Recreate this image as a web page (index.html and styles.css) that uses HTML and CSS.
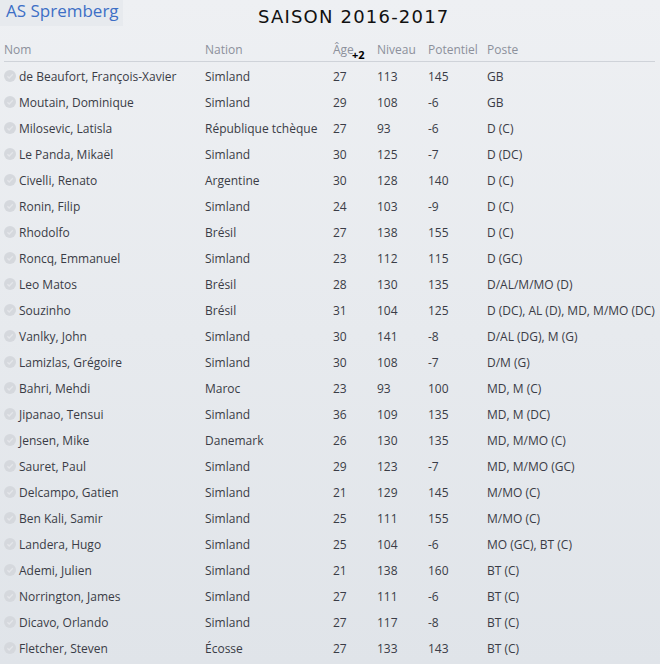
FILE: index.html
```html
<!DOCTYPE html>
<html lang="fr">
<head>
<meta charset="utf-8">
<link rel="stylesheet" href="styles.css">
</head>
<body>
<div class="page">
  <div class="top">
    <div class="club">AS Spremberg</div>
    <div class="title">Saison 2016-2017</div>
  </div>
  <div class="table">
    <div class="row head">
      <div>Nom</div><div>Nation</div><div class="age">Âge<span class="plus">+2</span></div><div>Niveau</div><div>Potentiel</div><div>Poste</div>
    </div>
    <div id="rows" class="rows"></div>
  </div>
</div>
<script>
const data = [
["de Beaufort, François-Xavier","Simland","27","113","145","GB"],
["Moutain, Dominique","Simland","29","108","-6","GB"],
["Milosevic, Latisla","République tchèque","27","93","-6","D (C)"],
["Le Panda, Mikaël","Simland","30","125","-7","D (DC)"],
["Civelli, Renato","Argentine","30","128","140","D (C)"],
["Ronin, Filip","Simland","24","103","-9","D (C)"],
["Rhodolfo","Brésil","27","138","155","D (C)"],
["Roncq, Emmanuel","Simland","23","112","115","D (GC)"],
["Leo Matos","Brésil","28","130","135","D/AL/M/MO (D)"],
["Souzinho","Brésil","31","104","125","D (DC), AL (D), MD, M/MO (DC)"],
["Vanlky, John","Simland","30","141","-8","D/AL (DG), M (G)"],
["Lamizlas, Grégoire","Simland","30","108","-7","D/M (G)"],
["Bahri, Mehdi","Maroc","23","93","100","MD, M (C)"],
["Jipanao, Tensui","Simland","36","109","135","MD, M (DC)"],
["Jensen, Mike","Danemark","26","130","135","MD, M/MO (C)"],
["Sauret, Paul","Simland","29","123","-7","MD, M/MO (GC)"],
["Delcampo, Gatien","Simland","21","129","145","M/MO (C)"],
["Ben Kali, Samir","Simland","25","111","155","M/MO (C)"],
["Landera, Hugo","Simland","25","104","-6","MO (GC), BT (C)"],
["Ademi, Julien","Simland","21","138","160","BT (C)"],
["Norrington, James","Simland","27","111","-6","BT (C)"],
["Dicavo, Orlando","Simland","27","117","-8","BT (C)"],
["Fletcher, Steven","Écosse","27","133","143","BT (C)"]
];
const icon = '<svg class="chk" viewBox="0 0 12 12" width="12" height="12"><circle cx="6" cy="6" r="6" fill="#d5d8dd"/><path d="M3.4 6.2 L5.2 8 L8.8 4.2" fill="none" stroke="#e4e6ea" stroke-width="1.3"/></svg>';
const host = document.getElementById('rows');
host.innerHTML = data.map(r =>
  '<div class="row"><div class="name">' + icon + '<span>' + r[0] + '</span></div>' +
  r.slice(1).map(c => '<div>' + c + '</div>').join('') + '</div>'
).join('');
</script>
</body>
</html>
```
FILE: styles.css
```css
html, body { margin: 0; padding: 0; }
body {
  width: 660px;
  height: 664px;
  overflow: hidden;
  background: linear-gradient(#eef0f3, #e0e4e9);
  font-family: "Open Sans", "Liberation Sans", sans-serif;
}
.page { position: relative; }
.top {
  height: 38px;
  position: relative;
}
.club {
  display: inline-block;
  background: #e7eaee;
  color: #3d6fc6;
  font-size: 17px;
  padding: 0 4px 4px 6px;
  line-height: 22px;
}
.title {
  position: absolute;
  left: 258px;
  top: 6px;
  font-family: "DejaVu Sans", sans-serif;
  font-size: 18px;
  letter-spacing: 1.2px;
  text-transform: uppercase;
  color: #111;
}
.table { padding: 0 5px 0 4px; }
.rows { padding-top: 1px; }
.row {
  display: grid;
  grid-template-columns: 201px 128px 44px 51px 59px 1fr;
  height: 26px;
  align-items: center;
  font-size: 12px;
  color: #3a3c46;
  white-space: nowrap;
}
.row.head {
  height: 23px;
  color: #8c909b;
  border-bottom: 1px solid #cfd3d9;
}
.age { position: relative; }
.plus {
  position: absolute;
  left: 19px;
  top: 6px;
  color: #000;
  font-weight: bold;
  font-size: 11px;
}
.name { display: flex; align-items: center; }
.chk { margin-right: 3px; flex: none; }
```
